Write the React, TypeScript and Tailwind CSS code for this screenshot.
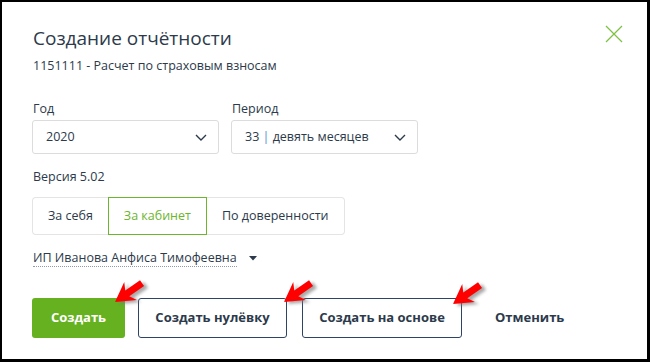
import * as React from 'react';

const Chevron = () => (
  <svg width="12" height="7" viewBox="0 0 12 7" fill="none">
    <path d="M1 1l5 5 5-5" stroke="#2c3a4b" strokeWidth="1.4" />
  </svg>
);

const ARROW = '0,0 -19,-11 -15,-3.5 -33,-3.5 -33,3.5 -15,3.5 -19,11';

const Arrow = ({className}: {className: string}) => (
  <svg className={className} width="48" height="36" viewBox="0 0 48 36">
    <defs>
      <filter id="arrow-blur" x="-20%" y="-20%" width="140%" height="140%">
        <feGaussianBlur stdDeviation="1.4" />
      </filter>
    </defs>
    <g transform="translate(8 28) rotate(145)" fill="#7a7a7a" opacity="0.65" filter="url(#arrow-blur)">
      <polygon points={ARROW} />
    </g>
    <g transform="translate(4 26) rotate(145)" fill="#ff0000">
      <polygon points={ARROW} />
    </g>
  </svg>
);

interface SelectProps {
  children: React.ReactNode;
}

const Select = (props: SelectProps) => (
  <div className="w-[187px] h-[34px] border border-[#dcdcdc] rounded-[3px] flex items-center justify-between pl-[13px] pr-[11px] text-[12.5px] text-[#2c3a4b]">
    <span>{props.children}</span>
    <Chevron />
  </div>
);

export default function App() {
  const [mode, setMode] = React.useState('cabinet');
  const modes = [
    {id: 'self', label: 'За себя'},
    {id: 'cabinet', label: 'За кабинет'},
    {id: 'proxy', label: 'По доверенности'},
  ];

  return (
    <div
      className="relative w-[650px] h-[362px] bg-white border-t-2 border-l-2 border-r-[3px] border-b-[3px] border-black pl-[30px] pt-[22px] text-[#2c3a4b]"
      style={{fontFamily: '"Open Sans", "Noto Sans", sans-serif'}}>
      <button className="absolute top-[23px] right-[24px] w-[18px] h-[18px]">
        <svg width="18" height="18" viewBox="0 0 18 18" fill="none">
          <path d="M1 1l16 16M17 1L1 17" stroke="#7cc142" strokeWidth="1.2" />
        </svg>
      </button>

      <div className="pl-px text-[19px] leading-[28px]">Создание отчётности</div>
      <div className="pl-px mt-[5px] text-[12.5px] leading-[18px]">1151111 - Расчет по страховым взносам</div>

      <div className="mt-[25px] flex gap-[12px]">
        <div>
          <div className="pl-px text-[12.5px] leading-[18px] mb-[2px]">Год</div>
          <Select>2020</Select>
        </div>
        <div>
          <div className="pl-px text-[12.5px] leading-[18px] mb-[2px]">Период</div>
          <Select>
            33 <span className="text-[#4a8fd6]">|</span> девять месяцев
          </Select>
        </div>
      </div>

      <div className="pl-px mt-[14px] text-[12.5px] leading-[18px]">Версия 5.02</div>

      <div className="mt-[11px] flex h-[38px] text-[12.5px]">
        {modes.map((m, i) => {
          const active = m.id === mode;
          return (
            <button
              key={m.id}
              onClick={() => setMode(m.id)}
              className={
                'px-[15px] h-full border-y ' +
                (i === 0 ? 'border-l rounded-l-[4px] ' : '') +
                (i === modes.length - 1 ? 'border-r rounded-r-[4px] ' : '') +
                (active
                  ? 'border border-[#6cb52d] text-[#6cb52d]'
                  : 'border-[#e4e4e4] text-[#2c3a4b]')
              }>
              {m.label}
            </button>
          );
        })}
      </div>

      <div className="pl-px mt-[14px] flex items-center h-[18px] text-[12.5px]">
        <span className="border-b border-dotted border-[#8c9bb0] leading-[17px]">
          ИП Иванова Анфиса Тимофеевна
        </span>
        <svg className="ml-[12px]" width="8" height="5" viewBox="0 0 8 5">
          <polygon points="0,0 8,0 4,4.5" fill="#2c3a4b" />
        </svg>
      </div>

      <div className="relative mt-[31px] flex items-center text-[13px] font-bold">
        <button className="w-[93px] h-[40px] rounded-[3px] bg-[#66b11f] text-white">Создать</button>
        <button className="ml-[13px] w-[149px] h-[40px] rounded-[3px] border border-[#2e4464] text-[#2c3a4b]">
          Создать нулёвку
        </button>
        <button className="ml-[15px] w-[160px] h-[40px] rounded-[3px] border border-[#2e4464] text-[#2c3a4b]">
          Создать на основе
        </button>
        <button className="ml-[33px] h-[40px] text-[#2c3a4b]">Отменить</button>
        <Arrow className="absolute left-[79px] top-[-22px]" />
        <Arrow className="absolute left-[248px] top-[-22px]" />
        <Arrow className="absolute left-[417px] top-[-20px]" />
      </div>
    </div>
  );
}
